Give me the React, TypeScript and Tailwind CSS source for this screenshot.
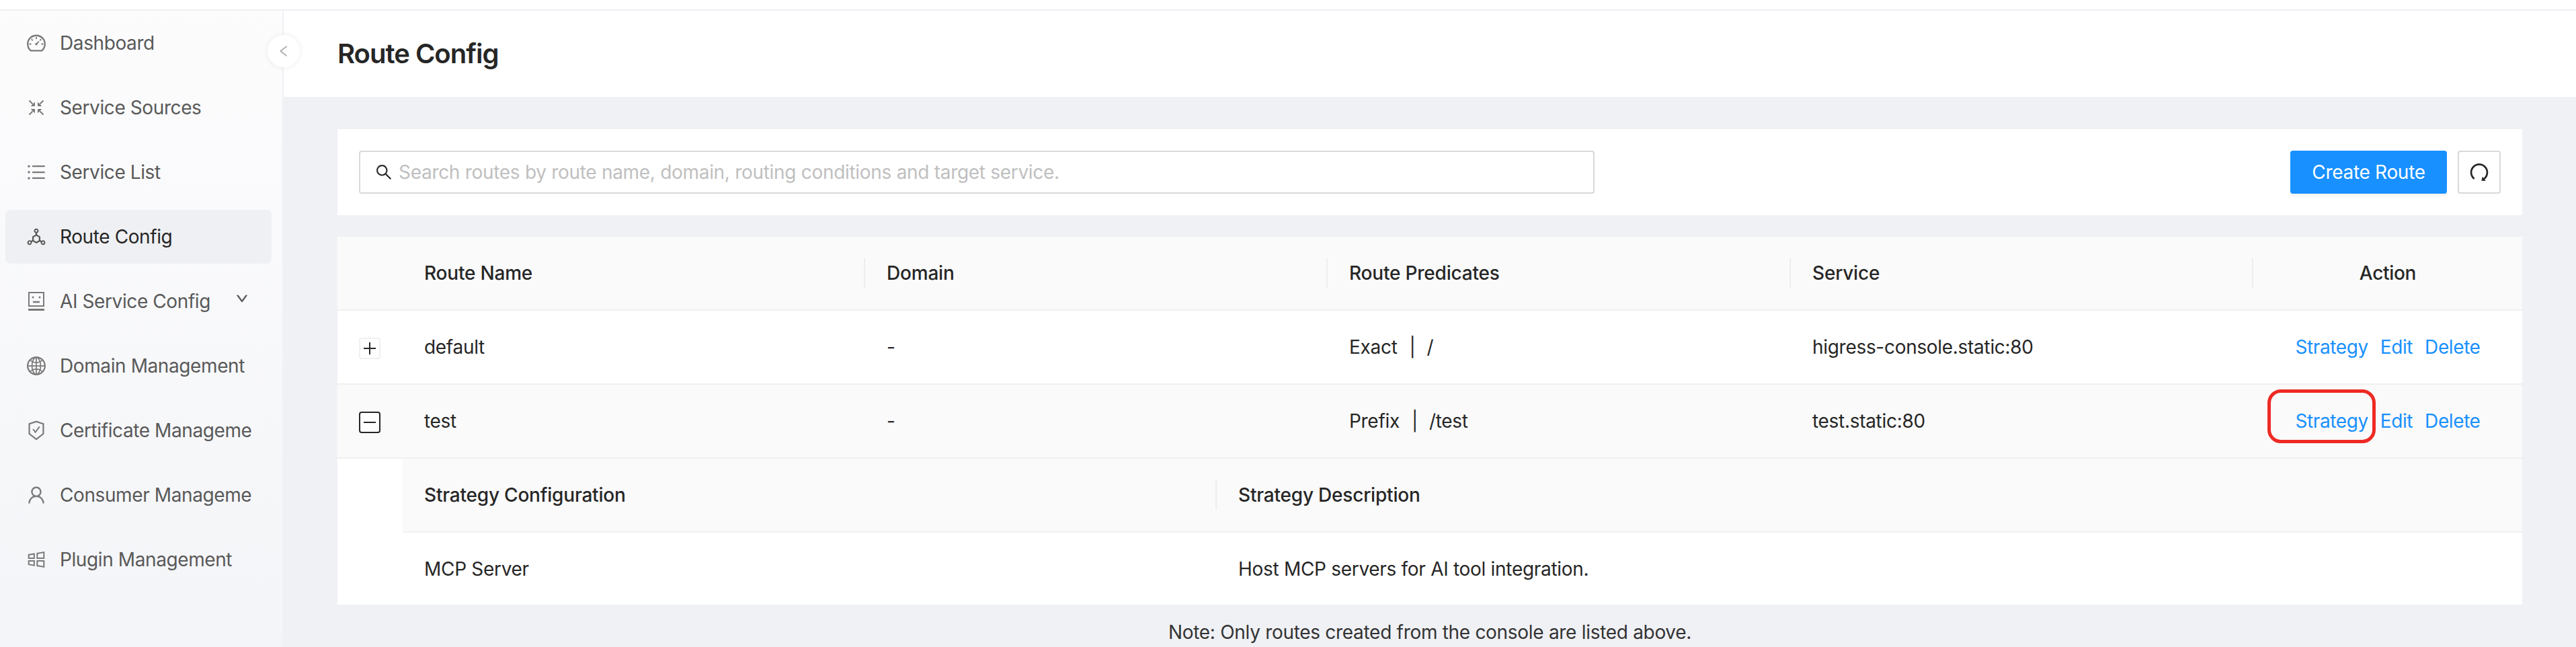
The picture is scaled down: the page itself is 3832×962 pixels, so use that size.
import {
  AiOutlineDashboard,
  AiOutlineBars,
  AiOutlineDeploymentUnit,
  AiOutlineGlobal,
  AiOutlineSafetyCertificate,
  AiOutlineUser,
  AiOutlineWindows,
  AiOutlineSearch,
  AiOutlineRedo,
  AiOutlineLeft,
  AiOutlineDown,
} from 'react-icons/ai';
import type { ReactNode } from 'react';

function SourcesIcon() {
  return (
    <svg viewBox="0 0 28 28" className="ml-[2px] h-[28px] w-[28px]" fill="currentColor" stroke="currentColor" strokeWidth="1">
      <path d="M3.500 3.500l5 5" fill="none" strokeWidth="2" />
      <path d="M11.500 6.500v5h-5z" />
      <path d="M24.500 3.500l-5 5" fill="none" strokeWidth="2" />
      <path d="M16.500 6.500v5h5z" />
      <path d="M3.500 24.500l5-5" fill="none" strokeWidth="2" />
      <path d="M11.500 21.500v-5h-5z" />
      <path d="M24.500 24.500l-5-5" fill="none" strokeWidth="2" />
      <path d="M16.500 21.500v-5h5z" />
    </svg>
  );
}

function AiConfigIcon() {
  return (
    <svg viewBox="0 0 28 28" className="ml-[2px] h-[28px] w-[28px]" fill="none" stroke="currentColor" strokeWidth="2">
      <rect x="3" y="1" width="22" height="20" />
      <circle cx="9" cy="8" r="1.500" fill="currentColor" stroke="none" />
      <circle cx="19" cy="8" r="1.500" fill="currentColor" stroke="none" />
      <path d="M9 15h10" strokeWidth="2.500" />
      <path d="M2 26.500h24" strokeWidth="3" />
    </svg>
  );
}

interface MenuItem {
  label: string;
  icon: ReactNode;
  active?: boolean;
  arrow?: boolean;
}

const iconClass = 'h-[32px] w-[32px]';

const menuItems: MenuItem[] = [
  { label: 'Dashboard', icon: <AiOutlineDashboard className={iconClass} /> },
  { label: 'Service Sources', icon: <SourcesIcon /> },
  { label: 'Service List', icon: <AiOutlineBars className={iconClass} /> },
  { label: 'Route Config', icon: <AiOutlineDeploymentUnit className={iconClass} />, active: true },
  { label: 'AI Service Config', icon: <AiConfigIcon />, arrow: true },
  { label: 'Domain Management', icon: <AiOutlineGlobal className={iconClass} /> },
  { label: 'Certificate Management', icon: <AiOutlineSafetyCertificate className={iconClass} /> },
  { label: 'Consumer Management', icon: <AiOutlineUser className={iconClass} /> },
  { label: 'Plugin Management', icon: <AiOutlineWindows className={iconClass} /> },
];

const rowGrid = 'grid grid-cols-[97px_688px_688px_689px_688px_400px] items-center';

function HeadCell({ children, last }: { children: ReactNode; last?: boolean }) {
  return (
    <div className="relative px-[32px] font-medium tracking-[-0.2px] text-[#262626]">
      {children}
      {!last && <span className="absolute right-0 top-1/2 h-[44px] w-[2px] -translate-y-1/2 bg-[#eeeeee]" />}
    </div>
  );
}

function Predicate({ type, path }: { type: string; path: string }) {
  return (
    <div className="flex px-[32px]">
      <span>{type}</span>
      <span className="ml-[18px] mr-[17px]">|</span>
      <span>{path}</span>
    </div>
  );
}

function Actions({ marked }: { marked?: boolean }) {
  return (
    <div className="flex justify-center gap-[18px] tracking-[-0.4px] text-[#1890ff]">
      <span className="relative">
        Strategy
        {marked && (
          <span className="absolute -bottom-[11px] -left-[41px] -right-[11px] -top-[25px] rounded-[20px] border-[5px] border-[#ee2a24]" />
        )}
      </span>
      <span>Edit</span>
      <span>Delete</span>
    </div>
  );
}

export default function App() {
  return (
    <div className="flex h-[962px] flex-col overflow-hidden bg-white font-['Inter',sans-serif] text-[28px] leading-[44px] tracking-[-0.3px] text-[#262626]">
      <div className="h-[16px] shrink-0 border-b-2 border-[#eeeff4]" />
      <div className="flex min-h-0 flex-1">
        <aside className="relative w-[422px] shrink-0 border-r-2 border-[#f0f1f5] bg-gradient-to-b from-[#fcfcfd] to-[#f4f5f8] px-[8px] pt-[8px] tracking-[-0.4px]">
          <nav className="flex w-[396px] flex-col gap-[16px]">
            {menuItems.map((item) => (
              <div
                key={item.label}
                className={`relative flex h-[80px] items-center rounded-[8px] pl-[30px] ${
                  item.active ? 'bg-[#eff0f3] text-[#262626]' : 'text-[#595959]'
                }`}
              >
                <span className={`w-[32px] shrink-0 ${item.active ? 'text-[#595959]' : 'text-[#7a7a7a]'}`}>{item.icon}</span>
                <span className="ml-[19px] w-[285px] overflow-hidden whitespace-nowrap">{item.label}</span>
                {item.arrow && (
                  <AiOutlineDown
                    stroke="currentColor"
                    strokeWidth={50}
                    className="absolute left-[342px] top-[26px] h-[20px] w-[20px] text-[#595959]"
                  />
                )}
              </div>
            ))}
          </nav>
          <button className="absolute -right-[26px] top-[36px] flex h-[48px] w-[48px] items-center justify-center rounded-full bg-white text-[#a6a6a6] shadow-[0_0_8px_rgba(0,0,0,0.08)]">
            <AiOutlineLeft className="h-[22px] w-[22px]" />
          </button>
        </aside>

        <main className="flex min-w-0 flex-1 flex-col bg-[#f0f1f5]">
          <div className="flex h-[128px] shrink-0 items-center bg-white pl-[80px] text-[40px] font-semibold tracking-[-1px] text-[#262626]">
            Route Config
          </div>
          <div className="px-[80px] pt-[48px]">
            <div className="flex h-[128px] items-center justify-between bg-white px-[32px]">
              <div className="flex h-[64px] w-[1838px] items-center rounded-[4px] border-2 border-[#d9d9d9] bg-white pl-[21px]">
                <AiOutlineSearch className="h-[28px] w-[28px] text-[#262626]" />
                <span className="ml-[8px] text-[#bfbfbf]">
                  Search routes by route name, domain, routing conditions and target service.
                </span>
              </div>
              <div className="flex items-center gap-[16px]">
                <button className="h-[64px] w-[233px] rounded-[4px] bg-[#1890ff] text-white shadow-[0_4px_0_rgba(0,0,0,0.04)]">
                  Create Route
                </button>
                <button className="flex h-[64px] w-[64px] items-center justify-center rounded-[4px] border-2 border-[#d9d9d9] bg-white">
                  <AiOutlineRedo className="h-[34px] w-[34px] text-[#262626]" />
                </button>
              </div>
            </div>

            <div className="mt-[32px] bg-white">
              <div className={`${rowGrid} h-[110px] rounded-t-[4px] border-b-2 border-[#f0f0f0] bg-[#fafafa]`}>
                <div />
                <HeadCell>Route Name</HeadCell>
                <HeadCell>Domain</HeadCell>
                <HeadCell>Route Predicates</HeadCell>
                <HeadCell>Service</HeadCell>
                <div className="text-center font-medium">Action</div>
              </div>

              <div className={`${rowGrid} h-[110px] border-b-2 border-[#f0f0f0] bg-white`}>
                <div className="mt-[3px] pl-[32px]">
                  <span className="flex h-[32px] w-[32px] items-center justify-center rounded-[4px] border-2 border-[#f0f0f0] bg-white text-[#262626]">
                    <span className="relative h-[18px] w-[18px]">
                      <span className="absolute left-0 top-[8px] h-[2px] w-[18px] bg-current" />
                      <span className="absolute left-[8px] top-0 h-[18px] w-[2px] bg-current" />
                    </span>
                  </span>
                </div>
                <div className="px-[32px]">default</div>
                <div className="px-[32px]">-</div>
                <Predicate type="Exact" path="/" />
                <div className="px-[32px]">higress-console.static:80</div>
                <Actions />
              </div>

              <div className={`${rowGrid} h-[110px] border-b-2 border-[#f0f0f0] bg-[#fafafa]`}>
                <div className="mt-[3px] pl-[32px]">
                  <span className="flex h-[32px] w-[32px] items-center justify-center rounded-[4px] border-2 border-[#262626] bg-white">
                    <span className="h-[2px] w-[18px] bg-[#262626]" />
                  </span>
                </div>
                <div className="px-[32px]">test</div>
                <div className="px-[32px]">-</div>
                <Predicate type="Prefix" path="/test" />
                <div className="px-[32px]">test.static:80</div>
                <Actions marked />
              </div>

              <div className="flex">
                <div className="w-[97px] shrink-0 bg-white" />
                <div className="min-w-0 flex-1">
                  <div className="grid h-[110px] grid-cols-[1211px_1fr] items-center border-b-2 border-[#f0f0f0] bg-[#fafafa]">
                    <HeadCell>Strategy Configuration</HeadCell>
                    <div className="px-[32px] font-medium tracking-[-0.2px]">Strategy Description</div>
                  </div>
                  <div className="grid h-[107px] grid-cols-[1211px_1fr] items-center bg-white">
                    <div className="px-[32px]">MCP Server</div>
                    <div className="px-[32px]">Host MCP servers for AI tool integration.</div>
                  </div>
                </div>
              </div>
            </div>

            <p className="mt-[19px] text-center text-[#333333]">Note: Only routes created from the console are listed above.</p>
          </div>
        </main>
      </div>
    </div>
  );
}
